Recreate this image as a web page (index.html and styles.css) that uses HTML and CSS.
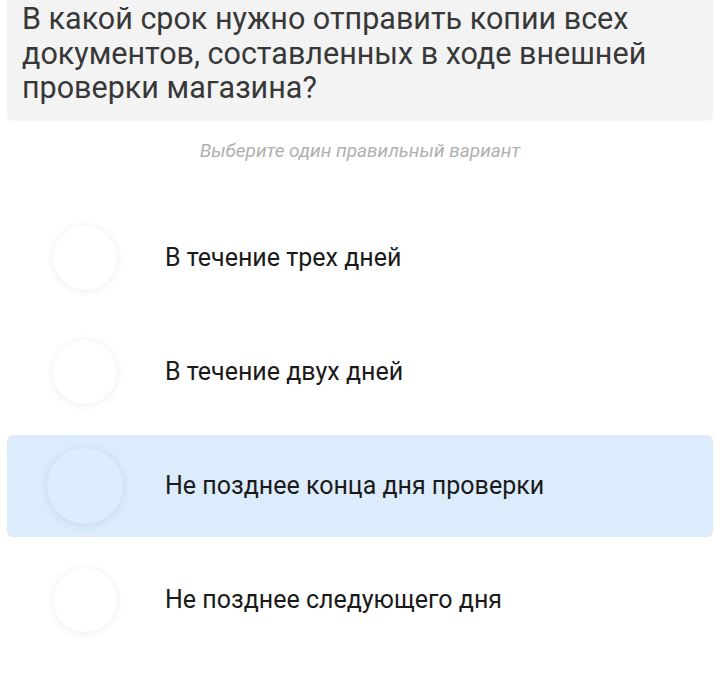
FILE: index.html
```html
<!DOCTYPE html>
<html lang="ru">
<head>
<meta charset="utf-8">
<link rel="stylesheet" href="styles.css">
</head>
<body>
<div class="page">
  <div class="question">В какой срок нужно отправить копии всех документов, составленных в ходе внешней проверки магазина?</div>
  <div class="hint">Выберите один правильный вариант</div>
  <div class="options">
    <div class="option"><span class="radio"></span><span class="label">В течение трех дней</span></div>
    <div class="option"><span class="radio"></span><span class="label">В течение двух дней</span></div>
    <div class="option selected"><span class="radio"></span><span class="label">Не позднее конца дня проверки</span></div>
    <div class="option"><span class="radio"></span><span class="label">Не позднее следующего дня</span></div>
  </div>
</div>
</body>
</html>
```
FILE: styles.css
```css
html, body { margin: 0; padding: 0; background: #fff; }
body { font-family: Roboto, "Noto Sans", sans-serif; }
.page { padding: 0 2px 0 7px; }
.question {
  background: #f3f3f3;
  border-radius: 0 0 6px 6px;
  padding: 2px 20px 14px 15px;
  font-size: 30.5px;
  line-height: 34.5px;
  color: #383838;
  box-shadow: 0 1px 1px rgba(0,0,0,0.04);
}
.hint {
  text-align: center;
  font-style: italic;
  font-size: 19px;
  color: #b0b0b0;
  margin-top: 20px;
  line-height: 22px;
}
.options {
  display: flex;
  flex-direction: column;
  gap: 12px;
  margin-top: 45px;
}
.option {
  display: flex;
  align-items: center;
  height: 102px;
  border-radius: 6px;
}
.radio {
  width: 64px;
  height: 64px;
  border-radius: 50%;
  background: #fff;
  box-shadow: 0 1px 8px rgba(0,0,0,0.08);
  margin-left: 46px;
  flex: none;
}
.label {
  margin-left: 48px;
  font-size: 25px;
  color: #1a1a1a;
}
.selected { background: #dcecfc; }
.selected .radio {
  width: 76px;
  height: 76px;
  margin-left: 40px;
  background: #ddedfd;
  box-shadow: 0 1px 9px rgba(60,90,130,0.14);
}
.selected .label { margin-left: 42px; }
```
